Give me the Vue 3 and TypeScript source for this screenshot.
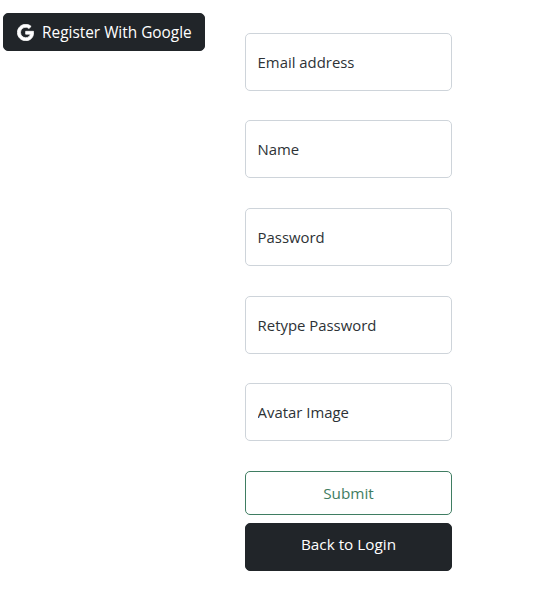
<script setup lang="ts">
const fields: string[] = ['Email address', 'Name', 'Password', 'Retype Password', 'Avatar Image']
</script>

<template>
  <div class="page">
    <div class="side">
      <button type="button" class="btn btn-google">
        <svg class="g" viewBox="0 0 488 512" width="17" height="17" aria-hidden="true">
          <path fill="currentColor" stroke="currentColor" stroke-width="22" d="M488 261.8C488 403.3 391.1 504 248 504 110.8 504 0 393.2 0 256S110.8 8 248 8c66.8 0 123 24.5 166.3 64.9l-67.5 64.9C258.5 52.6 94.3 116.6 94.3 256c0 86.5 69.1 156.6 153.7 156.6 98.2 0 135-70.4 140.8-106.9H248v-85.3h236.1c2.3 12.7 3.9 24.9 3.9 41.4z" />
        </svg>
        <span>Register With Google</span>
      </button>
    </div>
    <form class="form" @submit.prevent>
      <input v-for="f in fields" :key="f" class="field" type="text" :placeholder="f" :aria-label="f" />
      <div class="actions">
        <button type="submit" class="btn btn-submit">Submit</button>
        <button type="button" class="btn btn-back">Back to Login</button>
      </div>
    </form>
  </div>
</template>

<style scoped>
.page {
  display: flex;
  align-items: flex-start;
  padding: 13px 0 32px 3px;
  font-family: "Open Sans", "Noto Sans", sans-serif;
  color: #212529;
}
.side {
  width: 242px;
  flex: none;
}
.btn {
  font-family: inherit;
  font-size: 15.3px;
  box-sizing: border-box;
  border-radius: 5px;
  cursor: pointer;
}
.btn-google {
  display: flex;
  align-items: center;
  gap: 8px;
  width: 202px;
  height: 38px;
  padding: 0 0 0 13px;
  font-size: 15.4px;
  background: #212529;
  border: 1px solid #212529;
  color: #fff;
  white-space: nowrap;
}
.g {
  flex: none;
}
.form {
  display: flex;
  flex-direction: column;
  gap: 29.6px;
  width: 207px;
  margin-top: 19.8px;
}
.field {
  box-sizing: border-box;
  height: 58px;
  width: 100%;
  padding: 0 12px 0 11.6px;
  font-family: inherit;
  font-size: 14.9px;
  color: #2d3236;
  background: #fff;
  border: 1px solid #ced4da;
  border-radius: 5px;
  outline: none;
}
.field::placeholder {
  color: #2d3236;
  opacity: 1;
}
.actions {
  display: flex;
  flex-direction: column;
  gap: 8px;
}
.btn-submit {
  height: 44px;
  background: #fff;
  border: 1px solid #3f7d62;
  color: #3f7d62;
}
.btn-back {
  height: 48px;
  padding-bottom: 6px;
  background: #212529;
  border: 1px solid #212529;
  color: #fff;
}
</style>
